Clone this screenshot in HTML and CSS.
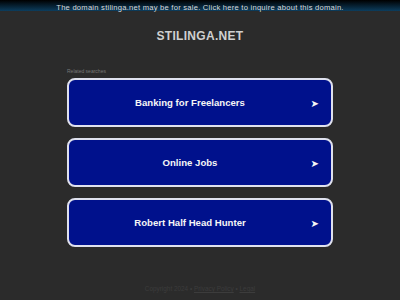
FILE: index.html
```html
<!DOCTYPE html>
<html lang="en">
<head>
    <meta charset="UTF-8">
    <meta name="viewport" content="width=device-width, initial-scale=1.0">
    <title>stilinga.net</title>
    <link rel="stylesheet" href="styles.css">
</head>
<body>

    <div class="sale-bar">
        <a href="#">The domain stilinga.net may be for sale. Click here to inquire about this domain.</a>
    </div>

    <div class="page">
        <h1 class="domain">STILINGA.NET</h1>

        <div class="searches">
            <p class="searches-title">Related searches</p>

            <a class="search-link" href="#">
                <span class="search-text">Banking for Freelancers</span>
                <span class="search-arrow">&#10148;</span>
            </a>
            <a class="search-link" href="#">
                <span class="search-text">Online Jobs</span>
                <span class="search-arrow">&#10148;</span>
            </a>
            <a class="search-link" href="#">
                <span class="search-text">Robert Half Head Hunter</span>
                <span class="search-arrow">&#10148;</span>
            </a>
        </div>
    </div>

    <div class="footer">
        Copyright 2024 &bull; <a href="#">Privacy Policy</a> &bull; <a href="#">Legal</a>
    </div>

</body>
</html>
```

FILE: styles.css
```css
* {
    box-sizing: border-box;
    font-family: 'Liberation Sans', Arial, sans-serif;
}

body {
    margin: 0;
    padding: 0;
    background: #2b2b2b;
    width: 400px;
    height: 300px;
    overflow: hidden;
    display: flex;
    flex-direction: column;
}

.sale-bar {
    height: 11px;
    background: linear-gradient(to bottom, #000000, #0c3d5e);
    text-align: center;
    line-height: 10px;
}

.sale-bar a {
    color: #d8dadc;
    font-size: 7.6px;
    letter-spacing: 0.24px;
    text-decoration: none;
}

.page {
    flex: 1;
    display: flex;
    flex-direction: column;
    align-items: center;
}

.domain {
    margin: 18px 0 0 0;
    color: #d0d0d0;
    font-size: 12px;
    font-weight: bold;
    line-height: 14px;
    letter-spacing: 0.3px;
}

.searches {
    width: 266px;
    margin-top: 25px;
}

.searches-title {
    margin: 0 0 3px 0;
    color: #777;
    font-size: 5px;
    line-height: 7px;
}

.search-link {
    position: relative;
    display: flex;
    justify-content: center;
    align-items: center;
    height: 49px;
    margin-bottom: 11px;
    padding-right: 20px;
    background: #00118c;
    border: 2px solid #dfe1ee;
    border-radius: 8px;
    text-decoration: none;
}

.search-text {
    color: #f6f6f6;
    font-size: 9.6px;
    font-weight: bold;
}

.search-arrow {
    position: absolute;
    right: 12px;
    top: 50%;
    transform: translateY(-50%);
    color: #f6f6f6;
    font-family: 'DejaVu Sans', sans-serif;
    font-size: 10px;
}

.footer {
    height: 16px;
    text-align: center;
    color: #3c3c3c;
    font-size: 6.4px;
    line-height: 10px;
}

.footer a {
    color: #3c3c3c;
}
```
